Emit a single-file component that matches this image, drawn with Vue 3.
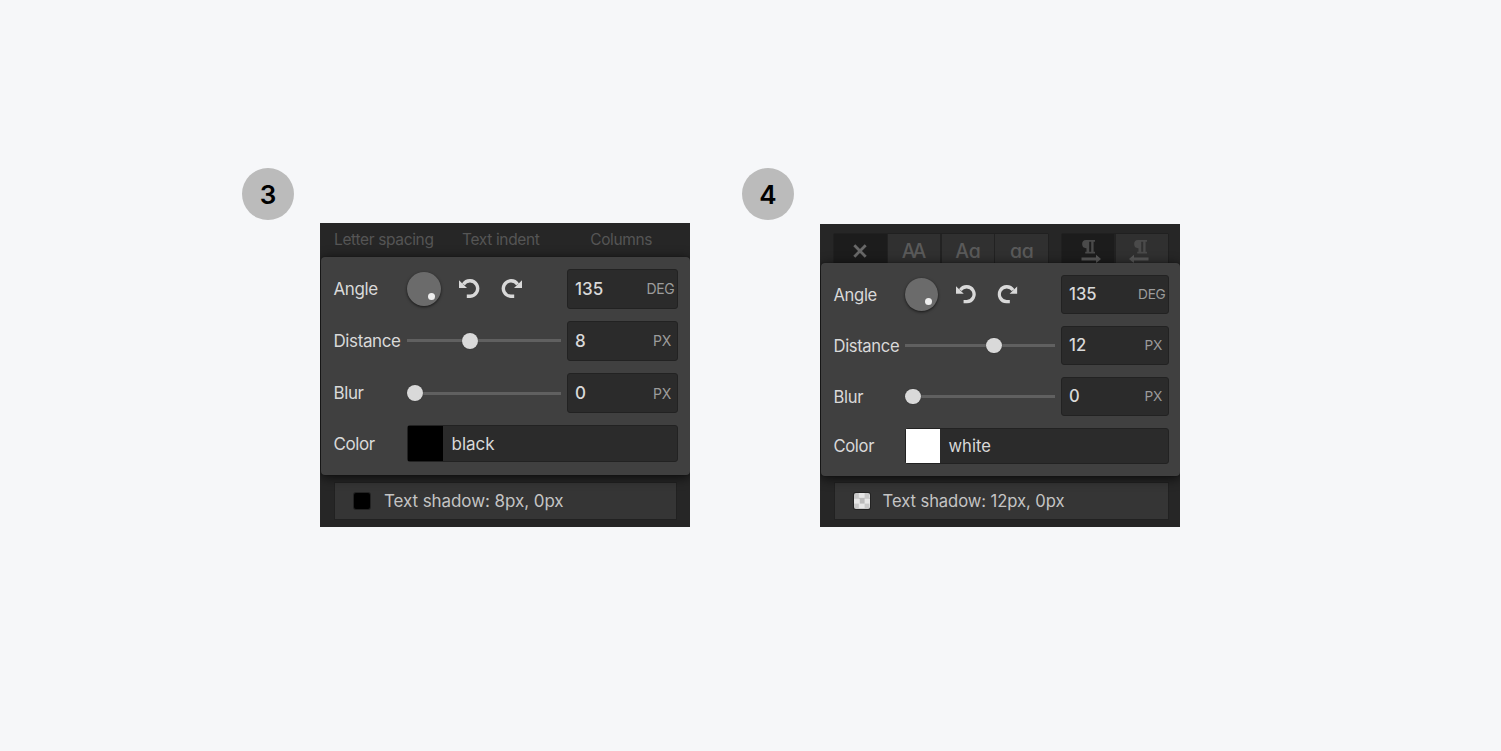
<template>
  <main class="page">
    <section
      v-for="panel in panels"
      :key="panel.step"
      class="step"
      :class="`step--${panel.step}`"
    >
      <div class="badge">{{ panel.step }}</div>

      <div class="panel">
        <!-- Header -->
        <div v-if="panel.step === 3" class="header">
          <span class="header__label">Letter spacing</span>
          <span class="header__label">Text indent</span>
          <span class="header__label">Columns</span>
        </div>
        <div v-else class="tools">
          <div class="tools__group">
            <span class="tool tool--active">
              <svg class="cross" viewBox="0 0 14 14">
                <path d="M1.3 1.3L12.7 12.7M12.7 1.3L1.3 12.7" />
              </svg>
            </span>
            <span class="tool tool--caps">AA</span>
            <span class="tool">Aa</span>
            <span class="tool">aa</span>
          </div>
          <div class="tools__group">
            <span class="tool tool--direction tool--active">
              <svg class="direction" viewBox="0 0 20 24">
                <path
                  class="direction__mark"
                  d="M5 0H14V1.8H12.6V11.8H14V13.5H8.8V11.8H10.2V1.8H8.2V11.8H9.4V13.5H4.2V11.8H5.5V8.2A4.1 4.1 0 0 1 5 0Z"
                />
                <path d="M.5 17.4H15V14.8L20 19L15 23.2V20.6H.5Z" />
              </svg>
            </span>
            <span class="tool tool--direction">
              <svg class="direction direction--left" viewBox="0 0 20 24">
                <path
                  class="direction__mark"
                  d="M9 0H18V1.8H16.6V11.8H18V13.5H12.8V11.8H14.2V1.8H12.2V11.8H13.4V13.5H8.2V11.8H9.5V8.2A4.1 4.1 0 0 1 9 0Z"
                />
                <path d="M19.5 17.4H5V14.8L0 19L5 23.2V20.6H19.5Z" />
              </svg>
            </span>
          </div>
        </div>

        <!-- Shadow settings -->
        <div class="popup">
          <div class="row">
            <span class="label">Angle</span>
            <div class="angle">
              <span class="dial"></span>
              <svg class="rotate" viewBox="0 0 21 20">
                <path class="rotate__arc" d="M4.4 5.4A7.7 7.7 0 1 1 11.2 17.2H7.8" />
                <path class="rotate__head" d="M0 1.2L8 9H0Z" />
              </svg>
              <svg class="rotate rotate--redo" viewBox="0 0 21 20">
                <path class="rotate__arc" d="M4.4 5.4A7.7 7.7 0 1 1 11.2 17.2H7.8" />
                <path class="rotate__head" d="M0 1.2L8 9H0Z" />
              </svg>
            </div>
            <div class="field">
              <span class="field__value">135</span>
              <span class="field__unit field__unit--deg">DEG</span>
            </div>
          </div>

          <div v-for="item in panel.sliders" :key="item.label" class="row">
            <span class="label">{{ item.label }}</span>
            <div class="slider">
              <span class="slider__knob" :style="{ marginLeft: item.offset + 'px' }"></span>
            </div>
            <div class="field">
              <span class="field__value">{{ item.value }}</span>
              <span class="field__unit">PX</span>
            </div>
          </div>

          <div class="row row--color">
            <span class="label">Color</span>
            <div class="field field--color">
              <span class="swatch" :style="{ background: panel.color }"></span>
              <span class="field__name">{{ panel.color }}</span>
            </div>
          </div>
        </div>

        <!-- Result -->
        <div class="layer">
          <span class="layer__icon" :class="`layer__icon--${panel.color}`"></span>
          <span class="layer__text">Text shadow: {{ panel.sliders[0].value }}px, 0px</span>
        </div>
      </div>
    </section>
  </main>
</template>

<script setup>
const panels = [
  {
    step: 3,
    color: "black",
    sliders: [
      { label: "Distance", value: 8, offset: 55 },
      { label: "Blur", value: 0, offset: 0 },
    ],
  },
  {
    step: 4,
    color: "white",
    sliders: [
      { label: "Distance", value: 12, offset: 81 },
      { label: "Blur", value: 0, offset: 0 },
    ],
  },
];
</script>

<style>
body {
  background: #f6f7f9;
}
</style>

<style scoped>
.page {
  display: flex;
  box-sizing: border-box;
  width: 1501px;
  height: 751px;
  padding: 168px 0 0 242px;
  overflow: hidden;
  background: #f6f7f9;
  font-family: Inter, "Liberation Sans", sans-serif;
}

.step {
  width: 500px;
}

.step--3 {
  --text: 17px;
  --label: 73.5px;
  --track: 154px;
  --field: 111px;
  --field-height: 40px;
  --row-gap: 12.2px;
  --color-height: 37px;
  --dial: 34px;
}

.step--4 {
  --text: 16.6px;
  --label: 72px;
  --track: 150px;
  --field: 108px;
  --field-height: 39px;
  --row-gap: 12px;
  --color-height: 36px;
  --dial: 33px;
}

.badge {
  display: flex;
  align-items: center;
  justify-content: center;
  width: 52px;
  height: 52px;
  border-radius: 50%;
  background: #bbb;
  color: #000;
  font-size: 26px;
  font-weight: 600;
}

.panel {
  box-sizing: border-box;
  width: 370px;
  height: 304px;
  margin: 3px 0 0 78px;
  padding-left: 1px;
  overflow: hidden;
  background: #262626;
}

.step--4 .panel {
  width: 360.4px;
  height: 303px;
  margin-top: 4px;
}

/* Header */
.header {
  display: grid;
  grid-template-columns: 128px 128.2px auto;
  align-items: center;
  height: 33.5px;
  padding-left: 13px;
  color: #555;
  font-size: 15.5px;
  letter-spacing: -0.35px;
}

.tools {
  display: flex;
  gap: 12px;
  height: 39px;
  padding: 9px 0 0 12px;
  box-sizing: border-box;
}

.tools__group {
  display: flex;
  gap: 1.2px;
  height: 34px;
  border: 1px solid #202020;
  border-radius: 2px;
  background: #222;
}

.tool {
  display: flex;
  align-items: center;
  justify-content: center;
  width: 52.6px;
  background: #303030;
  color: #5a5a5a;
  font-size: 19.5px;
  font-weight: 500;
  letter-spacing: -0.3px;
  line-height: 34px;
  font-feature-settings: "cv11";
}

.tool--active {
  background: #1c1c1c;
}

.tool--caps {
  letter-spacing: -3.5px;
  text-indent: -3.5px;
}

.tool--direction {
  align-items: flex-start;
  width: 52.5px;
}

.cross {
  width: 14px;
  height: 14px;
  fill: none;
  stroke: #686868;
  stroke-width: 2.8;
}

.direction {
  width: 20px;
  height: 24px;
  margin: 6px 0 0 6px;
  fill: #585858;
}

.direction--left {
  margin: 6px 6px 0 0;
}

.direction__mark {
  fill: #4a4a4a;
}

/* Popup */
.popup {
  display: flex;
  flex-direction: column;
  gap: var(--row-gap);
  box-sizing: border-box;
  height: 218.5px;
  padding: 12.2px 0 0 12.5px;
  border-radius: 4px;
  background: #404040;
  box-shadow: 0 0 1px #111, 0 2px 12px rgba(0, 0, 0, 0.75);
  position: relative;
}

.step--4 .popup {
  height: 212.5px;
  padding: 11.8px 0 0 12px;
}

.row {
  display: grid;
  grid-template-columns: var(--label) var(--track) var(--field);
  column-gap: 0;
  align-items: center;
  height: var(--field-height);
}

.row .field:not(.field--color) {
  margin-left: 6px;
}

.row--color {
  height: var(--color-height);
}

.label {
  color: #d9d9d9;
  font-size: var(--text);
  letter-spacing: -0.4px;
  white-space: nowrap;
}

.step--4 .label {
  padding: 1px 0 0 0.5px;
  letter-spacing: -0.35px;
}

.angle {
  display: flex;
  align-items: center;
}

.dial {
  position: relative;
  width: var(--dial);
  height: var(--dial);
  border-radius: 50%;
  background: #6b6b6b;
  box-shadow: 0 1px 3px rgba(0, 0, 0, 0.65);
}

.dial::after {
  content: "";
  position: absolute;
  right: 6px;
  bottom: 6px;
  width: 7px;
  height: 7px;
  border-radius: 50%;
  background: #eee;
}

.rotate {
  width: 21px;
  height: 20px;
  margin-left: 18px;
}

.rotate--redo {
  margin-left: 21px;
  transform: scaleX(-1);
}

.step--4 .rotate {
  width: 20.4px;
  height: 19.4px;
  margin-left: 17.8px;
}

.step--4 .rotate--redo {
  margin-left: 20.4px;
}

.rotate__arc {
  fill: none;
  stroke: #d9d9d9;
  stroke-width: 3.4;
}

.rotate__head {
  fill: #d9d9d9;
}

.slider {
  display: flex;
  align-items: center;
  height: 16px;
  background: linear-gradient(#606060, #606060) center / 100% 3px no-repeat;
}

.slider__knob {
  width: 16px;
  height: 16px;
  border-radius: 50%;
  background: #d9d9d9;
  box-shadow: 0 0 1px #222;
}

.step--4 .slider__knob {
  width: 15.5px;
  height: 15.5px;
}

.field {
  display: flex;
  align-items: center;
  justify-content: space-between;
  box-sizing: border-box;
  width: var(--field);
  height: var(--field-height);
  padding: 0 6px 0 7px;
  border: 1px solid #222;
  border-radius: 3px;
  background: #2b2b2b;
  color: #d9d9d9;
}

.field__value {
  font-size: var(--text);
  font-weight: 500;
}

.field__unit {
  color: #9c9c9c;
  font-size: 14px;
  letter-spacing: -0.3px;
}

.step--4 .field__unit {
  font-size: 13.7px;
}

.field__unit--deg {
  margin-right: -3.5px;
}

.field--color {
  grid-column: 2 / 4;
  justify-content: flex-start;
  width: calc(var(--track) + var(--field) + 6px);
  height: var(--color-height);
  padding: 0;
}

.swatch {
  width: calc(var(--color-height) - 2px);
  height: calc(var(--color-height) - 2px);
}

.field__name {
  margin-left: 8.5px;
  font-size: var(--text);
}

/* Result */
.layer {
  display: flex;
  align-items: center;
  box-sizing: border-box;
  width: 343.5px;
  height: 38px;
  margin: 7px 0 0 12.5px;
  border: 1px solid #212121;
  background: #353535;
  color: #c4c4c4;
}

.step--4 .layer {
  width: 335px;
  margin: 6.6px 0 0 12.6px;
}

.layer__icon {
  width: 16px;
  height: 16px;
  margin: 0 14px 0 19.4px;
  border-radius: 2px;
  box-shadow: 0 0 0 1px #222;
}

.step--4 .layer__icon {
  margin: 0 13px 0 19px;
}

.layer__icon--black {
  background: #000;
}

.layer__icon--white {
  background: conic-gradient(#e6e6e6 25%, #bbb 0 50%, #e6e6e6 0 75%, #c8c8c8 0) 0 0 / 10.6px 10.6px;
}

.layer__text {
  font-size: var(--text);
  letter-spacing: -0.07px;
  white-space: nowrap;
}
</style>
